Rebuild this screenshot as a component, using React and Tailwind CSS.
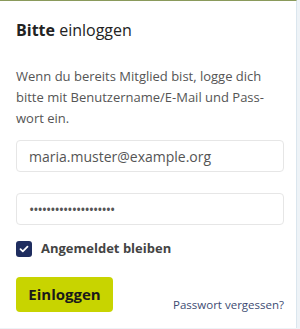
export default function App() {
  return (
    <div className="w-[300px] h-[329px] bg-[#eef3f7] overflow-hidden" style={{ fontFamily: '"Open Sans", sans-serif' }}>
      <div className="w-[297px] h-[328px] bg-white border-t border-[#8a9a5b] border-r border-r-[#dbe6ee] pl-4 pr-[12px] flex flex-col">
        <h1 className="mt-[18px] text-[16px] leading-[22px] text-[#222]">
          <span className="font-bold">Bitte</span> einloggen
        </h1>
        <p className="mt-[25px] text-[13px] leading-[21px] text-[#555]">
          Wenn du bereits Mitglied bist, logge dich bitte mit Benutzername/E-Mail und Pass-wort ein.
        </p>
        <div className="mt-[11px] h-[32px] border border-[#e6e6e6] rounded-[4px] flex items-center px-3 text-[14px] text-[#555]">
          maria.muster@example.org
        </div>
        <div className="mt-[21px] h-[32px] border border-[#e6e6e6] rounded-[4px] flex items-center px-3 text-[14px] text-[#555] tracking-[-1px]">
          ••••••••••••••••••••
        </div>
        <div className="mt-[14px] flex items-center gap-[9px]">
          <div className="w-[16px] h-[16px] rounded-[3px] bg-[#1f2d5f] flex items-center justify-center">
            <svg width="10" height="8" viewBox="0 0 10 8" fill="none">
              <path d="M1.5 4.2 L3.8 6.3 L8.5 1.6" stroke="white" strokeWidth="1.8" strokeLinecap="round" strokeLinejoin="round" />
            </svg>
          </div>
          <span className="text-[13px] font-bold text-[#444]">Angemeldet bleiben</span>
        </div>
        <div className="mt-[18px] flex items-end justify-between">
          <button className="w-[97px] h-[35px] rounded-[4px] bg-[#c8d400] text-[15px] font-bold text-[#1a1a1a]">
            Einloggen
          </button>
          <a className="text-[11.5px] text-[#3d4b72] mb-[-2px]">Passwort vergessen?</a>
        </div>
      </div>
    </div>
  );
}
